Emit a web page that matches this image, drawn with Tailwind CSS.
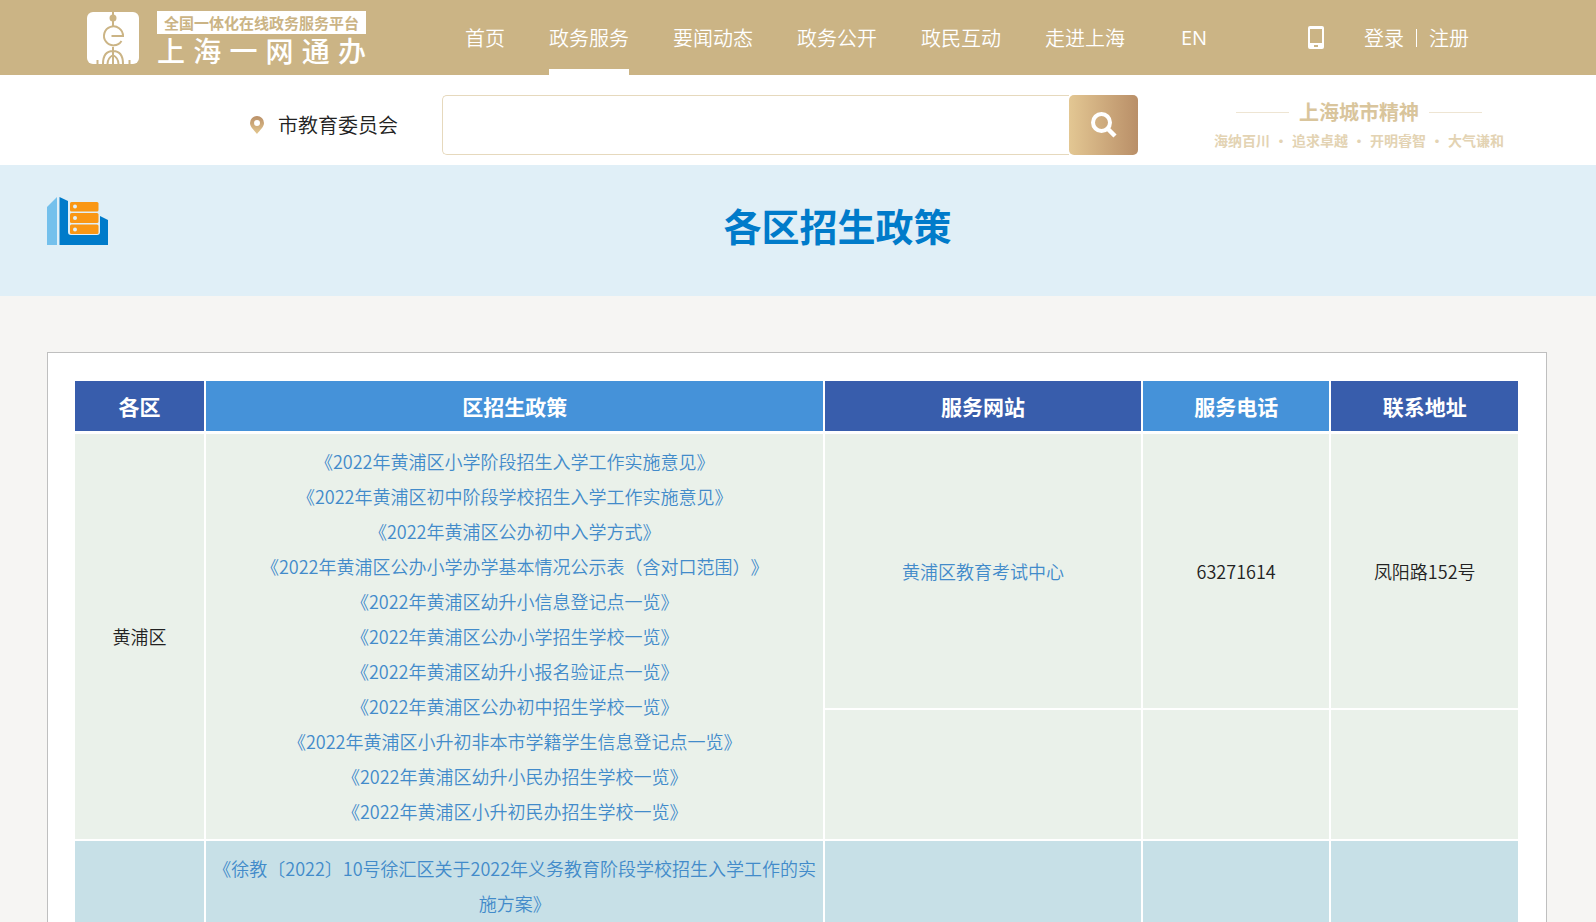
<!DOCTYPE html>
<html lang="zh-CN">
<head>
    <meta charset="UTF-8">
    <meta name="viewport" content="width=device-width, initial-scale=1.0">
    <title>各区招生政策</title>
    <script src="https://cdn.jsdelivr.net/npm/@tailwindcss/browser@4"></script>
</head>
<body class="bg-[#f6f5f3] font-['Noto_Sans_CJK_SC',sans-serif] text-[#222]">
    <!-- Top bar -->
    <header class="flex h-[75px] items-center bg-[#cbb485] pl-[87px] pr-[127px] text-xl text-white">
        <a href="#" class="flex items-center gap-[18px]" aria-label="上海一网通办">
            <svg class="h-[52px] w-[52px]" viewBox="0 0 52 52" fill="none">
                <rect width="52" height="52" rx="6" fill="#fff"/>
                <g stroke="#cbb485" stroke-width="2">
                    <path d="M26 0v14"/>
                    <circle cx="26" cy="6" r="2.500" fill="#cbb485"/>
                    <path d="M24.500 24h11.500a9.500 9.500 0 1 0-1.500 5"/>
                    <path d="M26 35v17M16 52c0-9 4-13 10-13s10 4 10 13M20.500 52c0-4 2-7 5.500-9c3.500 2 5.500 5 5.500 9M10.500 48v4M42.500 48v4"/>
                </g>
            </svg>
            <span class="flex w-[209px] flex-col gap-0.5">
                <span class="bg-white text-center text-[15px] leading-[23px] font-bold text-[#cbb485]">全国一体化在线政务服务平台</span>
                <span class="flex justify-between text-[28px] leading-7 font-medium"><span>上</span><span>海</span><span>一</span><span>网</span><span>通</span><span>办</span></span>
            </span>
        </a>
        <nav class="ml-[99px] flex h-full gap-11 font-[350] leading-[75px]">
            <a href="#">首页</a>
            <a href="#" class="border-b-6 border-white">政务服务</a>
            <a href="#">要闻动态</a>
            <a href="#">政务公开</a>
            <a href="#">政民互动</a>
            <a href="#">走进上海</a>
            <a href="#" class="ml-3 font-['Open_Sans',sans-serif] font-normal">EN</a>
        </nav>
        <div class="ml-auto flex items-center font-[350]">
            <svg class="mr-10 h-[23px] w-4" viewBox="0 0 16 23">
                <path fill="#fff" fill-rule="evenodd" d="M2 0h12a2 2 0 0 1 2 2v19a2 2 0 0 1-2 2H2a2 2 0 0 1-2-2V2a2 2 0 0 1 2-2zM2 3v14h12V3zM6 19v2h4v-2z"/>
            </svg>
            <a href="#">登录</a>
            <span class="mx-3 h-[18px] w-px bg-white"></span>
            <a href="#">注册</a>
        </div>
    </header>

    <!-- Search -->
    <section class="flex h-[90px] items-center bg-white pl-[250px] pr-[92px] pt-2.5">
        <svg class="h-[18px] w-3.5" viewBox="0 0 14 18">
            <defs>
                <linearGradient id="pin" x1="0" y1="0" x2="0" y2="1">
                    <stop stop-color="#ba9068"/>
                    <stop offset="1" stop-color="#e3c78f"/>
                </linearGradient>
            </defs>
            <path fill="url(#pin)" fill-rule="evenodd" d="M7 0a7 7 0 0 1 7 7c0 4-4 7-7 11C4 14 0 11 0 7a7 7 0 0 1 7-7zm0 4a3 3 0 1 0 0 6a3 3 0 0 0 0-6z"/>
        </svg>
        <label for="keyword" class="ml-3.5 text-xl font-[350] whitespace-nowrap">市教育委员会</label>
        <form class="ml-11 flex h-[60px] flex-1 items-stretch">
            <input id="keyword" type="text" class="min-w-0 flex-1 rounded-l-[5px] border border-r-0 border-[#e6d9bd] bg-white px-4 text-lg outline-none">
            <button type="button" aria-label="搜索" class="flex w-[69px] items-center justify-center rounded-[5px] bg-linear-to-r from-[#e3c793] to-[#b98f68]">
                <svg class="h-[26px] w-[26px]" viewBox="0 0 26 26" fill="none" stroke="#fff">
                    <circle cx="10.500" cy="10.500" r="8.500" stroke-width="4"/>
                    <path d="M17 17l7 7" stroke-width="4.500"/>
                </svg>
            </button>
        </form>
        <div class="ml-[76px] flex flex-col items-center gap-0.5 font-bold whitespace-nowrap">
            <p class="flex items-center gap-2.5 text-xl leading-7 text-[#d9c59c]">
                <span class="h-px w-[53px] bg-[#eee5d3]"></span>上海城市精神<span class="h-px w-[53px] bg-[#eee5d3]"></span>
            </p>
            <p class="flex items-center gap-1 text-sm leading-6 text-[#e3d3b3]">
                <span>海纳百川</span><span>·</span><span>追求卓越</span><span>·</span><span>开明睿智</span><span>·</span><span>大气谦和</span>
            </p>
        </div>
    </section>

    <!-- Title -->
    <section class="flex h-[131px] items-start bg-[#e0eff7] pl-[47px] pr-[49px] pt-8">
        <svg class="mr-5 h-12 w-[61px]" viewBox="0 0 61 48">
            <path fill="#74c0ec" d="M0 10L10 0v48H0z"/>
            <path fill="#007bca" d="M12.500 0L21 4v31a3 3 0 0 0 3 3h26a3 3 0 0 0 3-3V19l8 4v25H12.500z"/>
            <g fill="#fa9714">
                <rect x="23" y="5" width="28.500" height="9.500" rx="1.500"/>
                <rect x="23" y="16" width="28.500" height="10" rx="1.500"/>
                <rect x="23" y="27.500" width="28.500" height="9.500" rx="1.500"/>
            </g>
            <g fill="#e0eff7">
                <circle cx="28" cy="9.500" r="2"/>
                <circle cx="28" cy="21" r="2"/>
                <circle cx="28" cy="32.500" r="2"/>
            </g>
        </svg>
        <h1 class="flex-1 text-center text-[38px] leading-14 font-bold text-[#007bca]">各区招生政策</h1>
    </section>

    <!-- Policy table -->
    <main class="ml-[47px] mr-[49px] mt-14 border border-[#bfbfbf] bg-white pl-[25px] pr-[26px] py-[26px]">
        <table class="w-full table-fixed border-separate border-spacing-0.5 text-center text-lg leading-[35px] font-[350] [text-spacing-trim:space-all]">
            <colgroup>
                <col class="w-[9%]">
                <col class="w-[43%]">
                <col class="w-[22%]">
                <col class="w-[13%]">
                <col class="w-[13%]">
            </colgroup>
            <thead class="text-[21px] text-white">
                <tr class="h-[51px]">
                    <th class="border-b border-white bg-[#385dac] font-bold">各区</th>
                    <th class="border-b border-white bg-[#4592d9] font-bold">区招生政策</th>
                    <th class="border-b border-white bg-[#385dac] font-bold">服务网站</th>
                    <th class="border-b border-white bg-[#4592d9] font-bold">服务电话</th>
                    <th class="border-b border-white bg-[#385dac] font-bold">联系地址</th>
                </tr>
            </thead>
            <tbody>
                <tr class="h-[274px] bg-[#eaf1ea]">
                    <td rowspan="2">黄浦区</td>
                    <td rowspan="2" class="px-1 py-2.5 text-[#428bca]">
                        <a href="#" class="block">《2022年黄浦区小学阶段招生入学工作实施意见》</a>
                        <a href="#" class="block">《2022年黄浦区初中阶段学校招生入学工作实施意见》</a>
                        <a href="#" class="block">《2022年黄浦区公办初中入学方式》</a>
                        <a href="#" class="block">《2022年黄浦区公办小学办学基本情况公示表（含对口范围）》</a>
                        <a href="#" class="block">《2022年黄浦区幼升小信息登记点一览》</a>
                        <a href="#" class="block">《2022年黄浦区公办小学招生学校一览》</a>
                        <a href="#" class="block">《2022年黄浦区幼升小报名验证点一览》</a>
                        <a href="#" class="block">《2022年黄浦区公办初中招生学校一览》</a>
                        <a href="#" class="block">《2022年黄浦区小升初非本市学籍学生信息登记点一览》</a>
                        <a href="#" class="block">《2022年黄浦区幼升小民办招生学校一览》</a>
                        <a href="#" class="block">《2022年黄浦区小升初民办招生学校一览》</a>
                    </td>
                    <td><a href="#" class="text-[#428bca]">黄浦区教育考试中心</a></td>
                    <td>63271614</td>
                    <td>凤阳路152号</td>
                </tr>
                <tr class="h-[129px] bg-[#eaf1ea]">
                    <td></td>
                    <td></td>
                    <td></td>
                </tr>
                <tr class="bg-[#c7e0e7]">
                    <td></td>
                    <td class="px-1 py-2.5 text-[#428bca]">
                        <a href="#" class="block">《徐教〔2022〕10号徐汇区关于2022年义务教育阶段学校招生入学工作的实施方案》</a>
                    </td>
                    <td></td>
                    <td></td>
                    <td></td>
                </tr>
            </tbody>
        </table>
    </main>
</body>
</html>
